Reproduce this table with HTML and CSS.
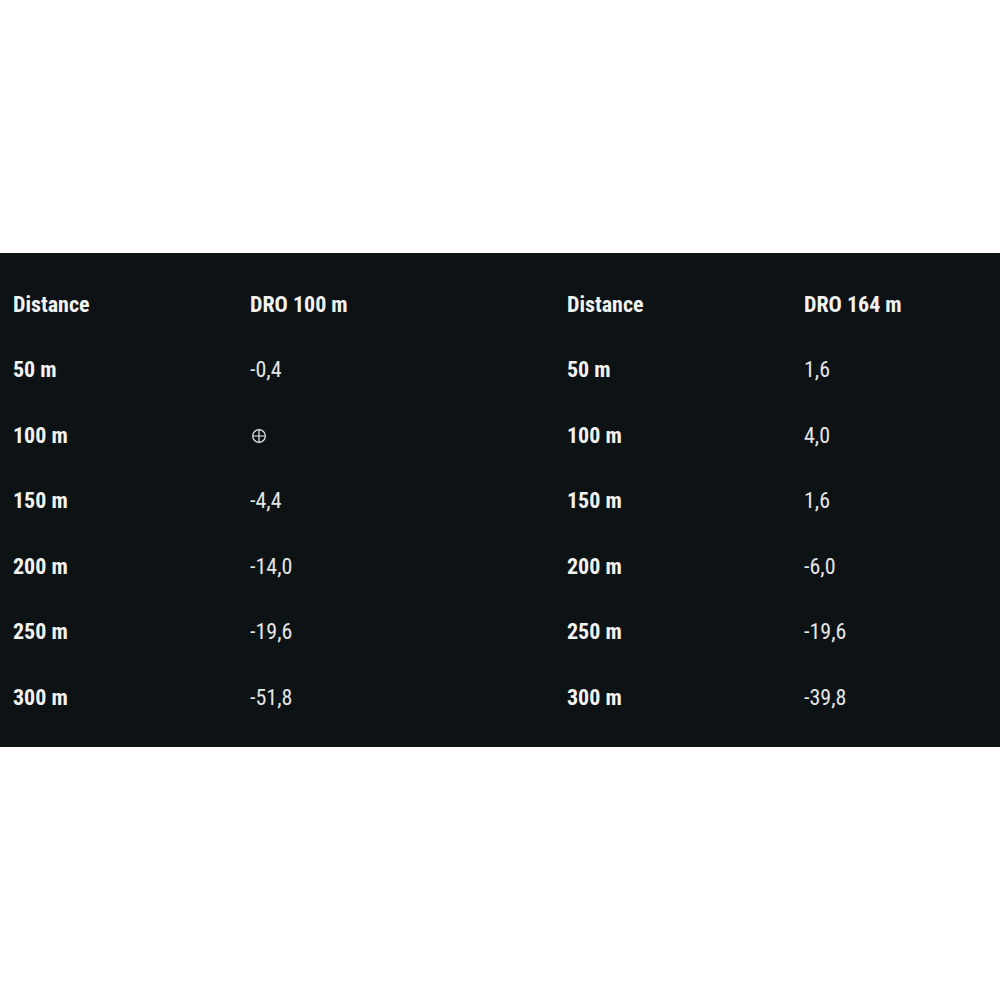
FILE: index.html
```html
<!DOCTYPE html>
<html>
<head>
<meta charset="utf-8">
<link rel="stylesheet" href="styles.css">
</head>
<body>
<div class="band">
  <div class="grid">
    <div class="cell head">Distance</div>
    <div class="cell head">DRO 100 m</div>
    <div class="cell head">Distance</div>
    <div class="cell head">DRO 164 m</div>

    <div class="cell head">50 m</div>
    <div class="cell val">-0,4</div>
    <div class="cell head">50 m</div>
    <div class="cell val">1,6</div>

    <div class="cell head">100 m</div>
    <div class="cell val"><svg class="zero" width="16" height="16" viewBox="0 0 16 16"><circle cx="8" cy="8" r="6.3" fill="none" stroke="#e8e8e8" stroke-width="1.2"/><path d="M8 1.7V14.3M1.7 8H14.3" stroke="#e8e8e8" stroke-width="1.2"/></svg></div>
    <div class="cell head">100 m</div>
    <div class="cell val">4,0</div>

    <div class="cell head">150 m</div>
    <div class="cell val">-4,4</div>
    <div class="cell head">150 m</div>
    <div class="cell val">1,6</div>

    <div class="cell head">200 m</div>
    <div class="cell val">-14,0</div>
    <div class="cell head">200 m</div>
    <div class="cell val">-6,0</div>

    <div class="cell head">250 m</div>
    <div class="cell val">-19,6</div>
    <div class="cell head">250 m</div>
    <div class="cell val">-19,6</div>

    <div class="cell head">300 m</div>
    <div class="cell val">-51,8</div>
    <div class="cell head">300 m</div>
    <div class="cell val">-39,8</div>
  </div>
</div>
</body>
</html>
```

FILE: styles.css
```css
html, body {
  margin: 0;
  padding: 0;
  background: #ffffff;
}
body {
  min-height: 1000px;
  display: flex;
  flex-direction: column;
  justify-content: center;
}
.band {
  background: #0d1215;
  height: 494px;
  box-sizing: border-box;
  padding: 19px 0 16px 13px;
  font-family: "Roboto Condensed", "Liberation Sans", sans-serif;
  color: #f2f2f2;
}
.grid {
  display: grid;
  grid-template-columns: 237px 317px 237px 1fr;
  grid-auto-rows: 65.5px;
}
.cell {
  display: flex;
  align-items: center;
  font-size: 22px;
  line-height: 1;
}
.head {
  font-weight: bold;
}
.val {
  font-weight: normal;
  color: #e6e6e6;
}
.zero {
  display: block;
  margin-left: 1px;
  margin-top: 1px;
}
```
